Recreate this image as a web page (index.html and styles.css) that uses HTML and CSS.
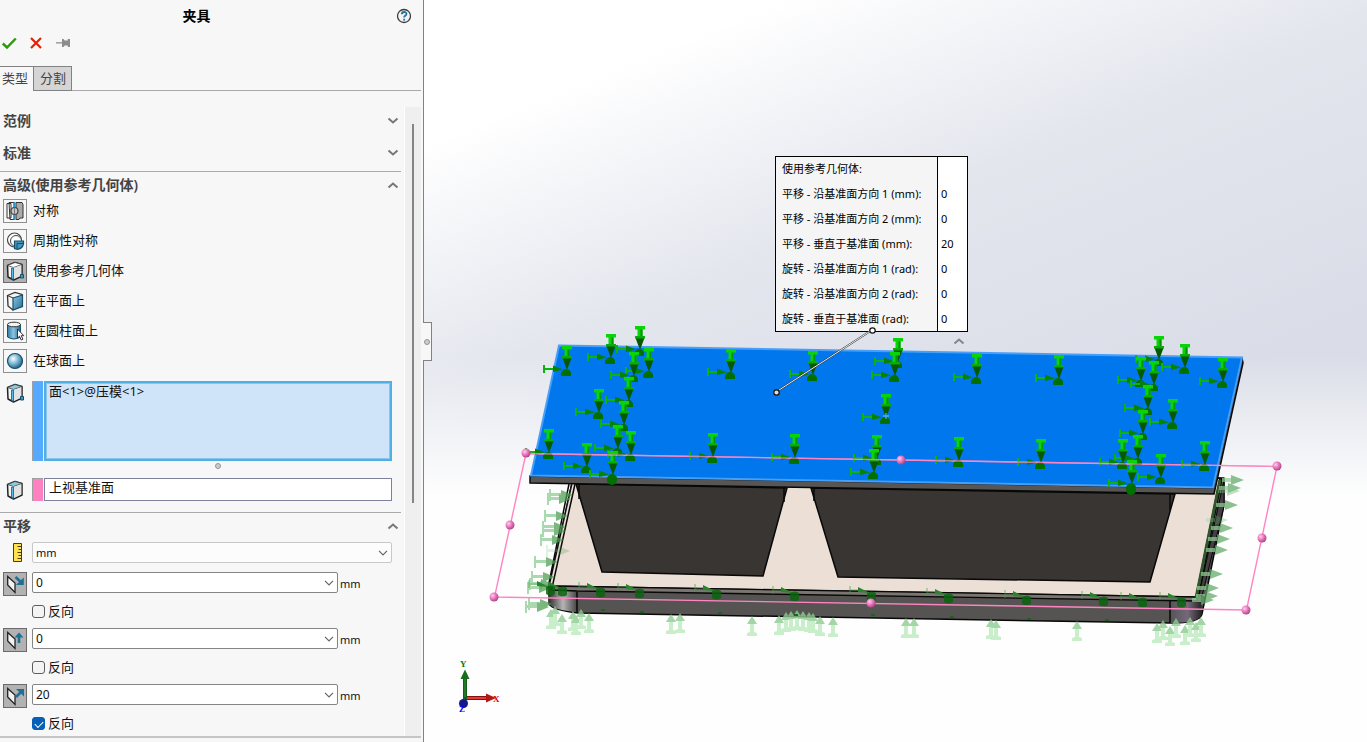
FILE: index.html
```html
<!DOCTYPE html>
<html lang="zh-CN">
<head>
<meta charset="utf-8">
<title>夹具</title>
<link rel="stylesheet" href="styles.css">
</head>
<body>
<svg class="defs" aria-hidden="true">
  <defs>
    <linearGradient id="steel" x1="0" y1="0" x2="1" y2="1"><stop offset="0" stop-color="#8cc6e0"/><stop offset="1" stop-color="#256e94"/></linearGradient>
    <linearGradient id="tube" x1="0" y1="0" x2="1" y2="0"><stop offset="0" stop-color="#2f7ba2"/><stop offset=".45" stop-color="#8cc4de"/><stop offset="1" stop-color="#22658a"/></linearGradient>
    <radialGradient id="ball" cx=".38" cy=".35" r=".65"><stop offset="0" stop-color="#fff"/><stop offset=".45" stop-color="#8cc3dc"/><stop offset="1" stop-color="#25678b"/></radialGradient>
    <symbol id="chev-down" viewBox="0 0 12 8"><path d="M1.500 1.500 6 5.500 10.500 1.500" fill="none" stroke="#777" stroke-width="2"/></symbol>
    <symbol id="chev-up" viewBox="0 0 12 8"><path d="M1.500 6.500 6 2.500 10.500 6.500" fill="none" stroke="#777" stroke-width="2"/></symbol>
    <symbol id="chev-thin" viewBox="0 0 10 6"><path d="M1 .8 5 4.800 9 .8" fill="none" stroke="#666" stroke-width="1.200"/></symbol>
    <symbol id="cube-ref" viewBox="0 0 24 24">
      <path d="M4.500 6.500 12 3.500 19 5.500V17l-8.500 4L5 18z" fill="#f4f4f4" stroke="#222" stroke-width="1.500" stroke-linejoin="round"/>
      <path d="M4.500 6.500 12 3.500 19 5.500 10.500 8.500z" fill="var(--top,#fff)" stroke="#444" stroke-width=".8"/>
      <path d="M10.500 9 18.300 6.300V16.500l-7.800 3.700z" fill="#e2e2e2"/>
      <path d="M9.500 9v12" stroke="#0d527a" stroke-width="2.600"/><path d="M9.500 9.500v10" stroke="#58b9e6" stroke-width="1"/>
    </symbol>
    <symbol id="plane" viewBox="0 0 24 24"><path d="M4.700 4.500 12 11v9.500L4.700 13z" fill="#f2f2f2" stroke="#222" stroke-width="1.300"/></symbol>
  </defs>
</svg>
<main class="app">
  <form class="panel">
    <header class="panel-head">
      <h1>夹具</h1>
      <button type="button" class="plain" aria-label="帮助"><svg width="16" height="16" viewBox="0 0 16 16"><circle cx="8" cy="8" r="6.500" fill="#f4f4f4" stroke="#3b3b42" stroke-width="1.300"/><path d="M5.800 6.300c0-3 4.700-3 4.700-.4 0 1.700-2.400 1.700-2.400 3.700" fill="none" stroke="#1c76a5" stroke-width="1.800"/><path d="M7.200 10.800h1.900v1.800H7.200z" fill="#1c76a5"/></svg></button>
    </header>
    <div class="actions">
      <button type="button" class="plain" aria-label="确定"><svg width="16" height="14" viewBox="0 0 16 14"><path d="M1.800 7.500 6 11.500 14.800 2.500" fill="none" stroke="#2f9a0d" stroke-width="2.500"/></svg></button>
      <button type="button" class="plain" aria-label="取消"><svg width="12" height="12" viewBox="0 0 12 12"><path d="M1 1l10 10M11 1 1 11" stroke="#e22205" stroke-width="2.200"/></svg></button>
      <button type="button" class="plain" aria-label="固定"><svg width="16" height="12" viewBox="0 0 16 12"><path d="M1 5.300h6V2h1.500l1.200 1.500h3V2H15v8h-2.200V8.500H9.700L8.500 10H7V6.500H1z" fill="#8c8c8c"/></svg></button>
    </div>
    <nav class="tabs" role="tablist">
      <button type="button" class="tab active" role="tab" aria-selected="true">类型</button>
      <button type="button" class="tab" role="tab" aria-selected="false">分割</button>
    </nav>
    <div class="body">
      <div class="content">
        <section>
          <h2><button type="button" class="fold">范例<svg><use href="#chev-down"/></svg></button></h2>
        </section>
        <section>
          <h2><button type="button" class="fold">标准<svg><use href="#chev-down"/></svg></button></h2>
        </section>
        <section class="ruled">
          <h2><button type="button" class="fold">高级(使用参考几何体)<svg><use href="#chev-up"/></svg></button></h2>
          <div class="types">
            <button type="button" class="type"><svg viewBox="0 0 24 24"><path d="M4 4.500h4V19H4zM6 3.500h5v17H7z" fill="#fff" stroke="#333"/><path d="M13 3.500h6l1 2V19h-3l-1 1.500h-3z" fill="#aaa" stroke="#333"/><path d="M11.500 3v18" stroke="#2b94c6" stroke-width="1.700"/><circle cx="11.500" cy="12" r="3.500" fill="#c6c6c6" stroke="#444" stroke-width="1.200"/><path d="M11.500 8.500v7" stroke="#777"/></svg><span>对称</span></button>
            <button type="button" class="type"><svg viewBox="0 0 24 24"><circle cx="11.500" cy="11" r="7" fill="#fff" stroke="#444" stroke-width="1.200"/><circle cx="13" cy="12" r="5.500" fill="#fff" stroke="#444"/><path d="M11.500 12h9q1 7-6 8.500l-3-1z" fill="#4095bb" stroke="#194d6b" stroke-width="1.200"/><path d="M14 20v-5.500h6" fill="none" stroke="#194d6b"/></svg><span>周期性对称</span></button>
            <button type="button" class="type selected"><svg viewBox="0 0 24 24"><use href="#cube-ref"/><path d="M17.500 15.500h3v3.500h-3z" fill="#3b9ac5" stroke="#164f70"/></svg><span>使用参考几何体</span></button>
            <button type="button" class="type"><svg viewBox="0 0 24 24"><path d="M4.500 6.500 12 3.500 19 5.500V17l-9 4-5-4z" fill="#f4f4f4" stroke="#333" stroke-width="1.300"/><path d="M10 9 19.500 6v11.500L10 21z" fill="url(#steel)" stroke="#164f70" stroke-width="1.200"/><path d="M4.500 6.500 10 9" stroke="#333"/></svg><span>在平面上</span></button>
            <button type="button" class="type"><svg viewBox="0 0 24 24"><path d="M4.500 5.500V18q6.500 4 13 0V5.500z" fill="url(#tube)" stroke="#164f70"/><ellipse cx="11" cy="5.500" rx="6.500" ry="2.300" fill="#f4f4f4" stroke="#333"/><path d="M14.500 10v9l2-1.700 1.700 3.700 1.700-.8-1.700-3.500h2.600z" fill="#fff" stroke="#333"/></svg><span>在圆柱面上</span></button>
            <button type="button" class="type"><svg viewBox="0 0 24 24"><circle cx="12" cy="12" r="7.500" fill="url(#ball)" stroke="#174e6d" stroke-width="1.200"/></svg><span>在球面上</span></button>
          </div>
          <div class="pick tall">
            <svg class="pick-icon" viewBox="0 0 24 24"><use href="#cube-ref"/><path d="M17.500 15.500h3v3.500h-3z" fill="#3b9ac5" stroke="#164f70"/></svg>
            <span class="swatch blue"></span>
            <textarea class="faces" aria-label="面" readonly>面&lt;1&gt;@压模&lt;1&gt;</textarea>
          </div>
          <div class="grip"><i class="dot"></i></div>
          <div class="pick">
            <svg class="pick-icon" viewBox="0 0 24 24"><use href="#cube-ref"/></svg>
            <span class="swatch pink"></span>
            <input class="ref" aria-label="参考" value="上视基准面" readonly>
          </div>
        </section>
        <section class="ruled">
          <h2><button type="button" class="fold">平移<svg><use href="#chev-up"/></svg></button></h2>
          <div class="field unit">
            <svg class="ruler" viewBox="0 0 24 21"><path d="M10.500 1.500h8v18h-8z" fill="#ffe04d" stroke="#4a3a10"/><path d="M14.500 4.500h4M15.500 7.500h3M14.500 10.500h4M15.500 13.500h3M14.500 16.500h4" stroke="#4a3a10"/></svg>
            <span class="combo pale"><select aria-label="单位"><option>mm</option></select><svg><use href="#chev-thin"/></svg></span>
          </div>
          <div class="field">
            <button type="button" class="dir" aria-label="沿基准面方向 1"><svg viewBox="0 0 24 24"><use href="#plane"/><path d="M12.500 5 19 11" stroke="#1f6f97" stroke-width="2.600"/><path d="M20.800 5.500V13h-8z" fill="#1f6f97"/></svg></button>
            <span class="combo"><select aria-label="方向 1 距离"><option>0</option></select><svg><use href="#chev-thin"/></svg></span><span class="suffix">mm</span>
          </div>
          <label class="check"><input type="checkbox">反向</label>
          <div class="field">
            <button type="button" class="dir" aria-label="沿基准面方向 2"><svg viewBox="0 0 24 24"><use href="#plane"/><path d="M16 15V8" stroke="#1f6f97" stroke-width="2.600"/><path d="M11.500 9.500 16 4.500 20.500 9.500z" fill="#1f6f97"/></svg></button>
            <span class="combo"><select aria-label="方向 2 距离"><option>0</option></select><svg><use href="#chev-thin"/></svg></span><span class="suffix">mm</span>
          </div>
          <label class="check"><input type="checkbox">反向</label>
          <div class="field">
            <button type="button" class="dir" aria-label="垂直于基准面"><svg viewBox="0 0 24 24"><use href="#plane"/><path d="M13 13 19 7" stroke="#1f6f97" stroke-width="2.600"/><path d="M13 5h8v7.500z" fill="#1f6f97"/></svg></button>
            <span class="combo"><select aria-label="垂直距离"><option>20</option></select><svg><use href="#chev-thin"/></svg></span><span class="suffix">mm</span>
          </div>
          <label class="check"><input type="checkbox" checked>反向</label>
        </section>
      </div>
      <div class="scroll"><div class="thumb"></div></div>
    </div>
    <footer class="panel-end"></footer>
  </form>

  <section class="viewport" aria-label="模型">
    <button type="button" class="splitter" aria-label="折叠面板"><i class="dot"></i></button>
    <table class="callout">
      <tr><th>使用参考几何体:</th><td></td></tr>
      <tr><th>平移 - 沿基准面方向 1 (mm):</th><td>0</td></tr>
      <tr><th>平移 - 沿基准面方向 2 (mm):</th><td>0</td></tr>
      <tr><th>平移 - 垂直于基准面 (mm):</th><td>20</td></tr>
      <tr><th>旋转 - 沿基准面方向 1 (rad):</th><td>0</td></tr>
      <tr><th>旋转 - 沿基准面方向 2 (rad):</th><td>0</td></tr>
      <tr><th>旋转 - 垂直于基准面 (rad):</th><td>0</td></tr>
    </table>
    <svg class="scene">
      <defs>
        <linearGradient id="cornerL"><stop offset="0" stop-color="#333"/><stop offset=".5" stop-color="#b5b5b5"/><stop offset="1" stop-color="#444"/></linearGradient>
        <linearGradient id="cornerR"><stop offset="0" stop-color="#555"/><stop offset=".55" stop-color="#75687a"/><stop offset="1" stop-color="#222"/></linearGradient>
        <radialGradient id="pinkball" cx=".35" cy=".35" r=".7"><stop offset="0" stop-color="#ffd0ee"/><stop offset=".45" stop-color="#ee7dc4"/><stop offset="1" stop-color="#a8417f"/></radialGradient>
        <g id="fix">
          <path d="M-24-11h2v3h9v2h-9v3h-2z" fill="#0eb30e"/><path d="M-14-10.500-4-6.500-14-4z" fill="#078207"/>
          <path d="M-6 0v-3q2-4 5-4 4 0 5 4v3z" fill="#007000"/>
          <path d="M-5-30h10v3.500H2.500v8h-5v-8H-5z" fill="#08d408"/><path d="M.5-26.500h2v8h-2z" fill="#079107"/>
          <path d="M-4.500-18h9L0-6z" fill="#045904"/><path d="M-5-20H5v2.500H-5z" fill="#08ad08"/>
        </g>
        <g id="side"><path d="M-24-6h2v4h11v3h-11v5h-2z" fill="#8ccc91"/><path d="M-12-5 0 0-12 5z" fill="#4b9d50"/></g>
        <g id="sideR"><path d="M-22-2h12v4h-12z" fill="#8fd094"/><path d="M-13-5 0 0-13 5z" fill="#61a966"/></g>
        <g id="up"><path d="M-5 0v-3l3-1v-9h4v9l3 1v3z" fill="#bbecbd"/><path d="M-5-12 0-20 5-12z" fill="#8dcb91"/></g>
        <g id="tray"><path d="M-22-11v8M-22-7h10" stroke="#43a348" stroke-opacity=".6" stroke-width="1.200" fill="none"/><path d="M-14-10-2-4-14-5z" fill="#2b842e"/><path d="M-5-4q5-3 9 0v7q-4 3-9 0z" fill="#0b640f" fill-opacity=".85"/></g>
        <circle id="handle" r="4.500" fill="url(#pinkball)"/>
      </defs>
      <g transform="translate(-424 0)">
        <g stroke-linejoin="round">
          <path d="M572 483 549 588v16q4 6 29 9l592 10q30 0 32-9l22-109v-27z" fill="#565452" stroke="#080808" stroke-width="1.500"/>
          <path d="M549 588v16q4 6 28 8v-20z" fill="url(#cornerL)"/>
          <path d="M1170 601v22q30 0 32-9l-1-20z" fill="url(#cornerR)"/>
          <path d="M572 483 1220 478 1196 597 549 586z" fill="#ecdfd6" stroke="#111" stroke-width="1.500"/>
          <path d="M549 586 1196 597 1198 601 577 591 552 590z" fill="#7a7570" stroke="#080808" stroke-width="1.300"/>
          <path d="M569 484 548 588M575 484 552 588M577 592v20M1170 600v23M1222 478 1198 599" stroke="#080808" stroke-width="1.500" fill="none"/>
          <path d="M1220 480 1196 598" stroke="#31552c" stroke-width="3"/>
          <path d="M1224 480v26l-22 90-3-1z" fill="#453e42" stroke="#080808"/>
          <path d="M576 484 602 572 763 576 787 488z" fill="#383533" stroke="#080808" stroke-width="1.500"/>
          <path d="M811 488 838 577 1150 582 1175 494z" fill="#383533" stroke="#080808" stroke-width="1.500"/>
          <path d="M579 485v14M784 487v15M814 488v13M1170 494v16" stroke="#080808" stroke-width="1.500"/>
        </g>
        <g opacity=".72">
          <use href="#side" x="573" y="495"/><use href="#side" x="571" y="499"/><use href="#side" x="568" y="516"/><use href="#side" x="566" y="527"/><use href="#side" x="566" y="531"/><use href="#side" x="564" y="540"/><use href="#side" x="570" y="551" opacity=".35"/><use href="#side" x="558" y="562"/><use href="#side" x="555" y="577"/><use href="#side" x="553" y="584"/><use href="#side" x="551" y="588"/><use href="#side" x="552" y="604"/><use href="#side" x="549" y="607"/>
        </g>
        <g opacity=".72">
          <use href="#sideR" x="1244" y="480"/><use href="#sideR" x="1241" y="488"/><use href="#sideR" x="1240" y="491" opacity=".5"/><use href="#sideR" x="1238" y="505"/><use href="#sideR" x="1228" y="520" opacity=".4"/><use href="#sideR" x="1233" y="528"/><use href="#sideR" x="1230" y="539"/><use href="#sideR" x="1228" y="550"/><use href="#sideR" x="1223" y="574"/><use href="#sideR" x="1219" y="588"/><use href="#sideR" x="1218" y="596"/><use href="#sideR" x="1214" y="600"/>
        </g>
        <g opacity=".8">
          <use href="#up" x="551" y="629"/><use href="#up" x="555" y="626"/><use href="#up" x="562" y="634"/><use href="#up" x="573" y="631"/><use href="#up" x="576" y="635"/><use href="#up" x="581" y="629"/><use href="#up" x="589" y="633"/>
          <use href="#up" x="671" y="634"/><use href="#up" x="680" y="633"/><use href="#up" x="752" y="636"/><use href="#up" x="779" y="635"/><use href="#up" x="786" y="632"/><use href="#up" x="791" y="631"/><use href="#up" x="797" y="630"/><use href="#up" x="803" y="631"/><use href="#up" x="809" y="632"/><use href="#up" x="813" y="633"/><use href="#up" x="820" y="636"/><use href="#up" x="833" y="637"/>
          <use href="#up" x="906" y="638"/><use href="#up" x="914" y="638"/><use href="#up" x="991" y="639"/><use href="#up" x="996" y="640"/><use href="#up" x="1077" y="641"/>
          <use href="#up" x="1157" y="643"/><use href="#up" x="1163" y="640"/><use href="#up" x="1170" y="646"/><use href="#up" x="1176" y="638"/><use href="#up" x="1185" y="645"/><use href="#up" x="1190" y="637"/><use href="#up" x="1196" y="642"/><use href="#up" x="1201" y="637"/>
        </g>
        <use href="#tray" x="563" y="592"/><use href="#tray" x="551" y="591"/><use href="#tray" x="601" y="593"/><use href="#tray" x="640" y="594"/><use href="#tray" x="717" y="595"/><use href="#tray" x="795" y="597"/><use href="#tray" x="872" y="597"/><use href="#tray" x="949" y="599"/><use href="#tray" x="1027" y="601"/><use href="#tray" x="1104" y="602"/><use href="#tray" x="1143" y="603"/><use href="#tray" x="1182" y="603"/>
        <path d="M601 610h4M640 612h4M718 613h4M794 615h4M871 615h4M950 617h4M1027 619h4M1105 620h4" stroke="#19651c" stroke-width="2"/>

        <path d="M530 476 1213 488 1242 358 1243 363 1214 494 530 483z" fill="#585654" stroke="#080808" stroke-width="1.500"/>
        <path d="M559 345.500 1242 357.500 1213 487.500 531 475.500z" fill="#0077ed" stroke="#489ff8" stroke-width="2"/>
        <path d="M526 453.500 1277 466.500 1246.500 610 494.500 597z" fill="none" stroke="#ff85c2" stroke-width="1.400"/>
        <g>
          <use href="#fix" x="567" y="376"/><use href="#fix" x="640" y="356"/><use href="#fix" x="611" y="364"/><use href="#fix" x="649" y="378"/><use href="#fix" x="634" y="382"/><use href="#fix" x="629" y="407"/><use href="#fix" x="599" y="419"/><use href="#fix" x="624" y="431"/><use href="#fix" x="549" y="459"/><use href="#fix" x="618" y="455"/><use href="#fix" x="631" y="461"/><use href="#fix" x="587" y="473"/><use href="#fix" x="613" y="481"/><circle cx="612" cy="480" r="5" fill="#007000"/><use href="#fix" x="731" y="379"/><use href="#fix" x="713" y="463"/>
          <use href="#fix" x="813" y="381"/><use href="#fix" x="898" y="368"/><use href="#fix" x="895" y="382"/><use href="#fix" x="977" y="384"/><use href="#fix" x="886" y="424"/><use href="#fix" x="795" y="464"/><use href="#fix" x="877" y="465"/><use href="#fix" x="874" y="479"/><use href="#fix" x="959" y="467"/>
          <use href="#fix" x="1059" y="385"/><use href="#fix" x="1159" y="366"/><use href="#fix" x="1185" y="374"/><use href="#fix" x="1223" y="388"/><use href="#fix" x="1141" y="387"/><use href="#fix" x="1154" y="391"/><use href="#fix" x="1148" y="415"/><use href="#fix" x="1173" y="429"/><use href="#fix" x="1143" y="440"/><use href="#fix" x="1138" y="465"/><use href="#fix" x="1123" y="469"/><use href="#fix" x="1041" y="469"/><use href="#fix" x="1161" y="484"/><use href="#fix" x="1205" y="471"/><use href="#fix" x="1132" y="490"/><circle cx="1131" cy="490" r="5" fill="#007000"/>
        </g>
        <path d="M526 453.500 1277 466.500" stroke="#ff85c2" stroke-width="1.300" stroke-opacity=".75"/>
        <path d="M883 416h6M886 413v6" stroke="#71c4ff"/>
        <use href="#handle" x="526" y="453"/><use href="#handle" x="901" y="460"/><use href="#handle" x="1277" y="466"/><use href="#handle" x="510" y="525"/><use href="#handle" x="1262" y="538"/><use href="#handle" x="494" y="597"/><use href="#handle" x="871" y="603"/><use href="#handle" x="1246" y="610"/>
        <path d="M872 330 776 392" stroke="#333" stroke-width="1.800"/><path d="M872 330 776 392" stroke="#eee" stroke-width="1"/>
        <circle cx="872.500" cy="330.500" r="2.700" fill="#fff" stroke="#111" stroke-width="1.200"/><circle cx="776.500" cy="392.500" r="2.700" fill="#ddd" stroke="#111" stroke-width="1.200"/>
        <path d="M954.500 343.500 959 339.500 963.500 343.500" fill="none" stroke="#858585" stroke-width="2"/>
        <path d="M465 698h22" stroke="#801212" stroke-width="4"/><path d="M465 698h22" stroke="#e33c38" stroke-width="2"/><path d="M486 693.500 496 698 486 702.500z" fill="#b01818"/>
        <path d="M465 699v-22" stroke="#145f18" stroke-width="4"/><path d="M465 697v-20" stroke="#38933b"/><path d="M460.500 679 465 669.500 469.500 679z" fill="#146d19"/>
        <circle cx="463.500" cy="703.500" r="4.500" fill="#16168e"/>
        <text class="axis" x="460" y="667" fill="#087a08">Y</text><text class="axis" x="493" y="702" fill="#e00000">X</text><text class="axis" x="459" y="712" fill="#0808e8">Z</text>
      </g>
    </svg>
  </section>
</main>
</body>
</html>
```
FILE: styles.css
```css
* { box-sizing: border-box; }

body {
  margin: 0;
  font-family: "Noto Sans", "Noto Sans CJK SC", sans-serif;
  font-size: 13px;
  line-height: 20px;
  color: #111;
}

button, input, select, textarea {
  font: inherit;
  color: inherit;
  margin: 0;
}

.defs { position: absolute; width: 0; height: 0; }

.app {
  display: flex;
  height: 100vh;
  overflow: hidden;
}

.panel {
  display: flex;
  flex: 0 0 424px;
  flex-direction: column;
  padding-right: 2px;
  background: #f7f7f7;
  border-right: 1px solid #828282;
}

.panel-head {
  display: flex;
  align-items: center;
  height: 32px;
  padding-right: 9px;
}

h1 {
  flex: 1;
  margin: 0;
  padding-right: 3px;
  font-size: 14px;
  font-weight: 600;
  text-align: center;
  color: #000;
}

.plain {
  display: flex;
  padding: 0;
  background: none;
  border: 0;
}

.actions {
  display: flex;
  gap: 13px;
  align-items: center;
  height: 22px;
  padding-left: 1px;
}

.tabs {
  display: flex;
  height: 25px;
  margin-top: 12px;
  border-bottom: 1px solid #a9a9a9;
}

.tab {
  height: 25px;
  padding: 0 5px 0 6px;
  line-height: 21px;
  color: #444;
  background: #d5d5d5;
  border: 1px solid #828282;
}

.tab.active {
  padding: 0 5px 2px 2px;
  background: #f7f7f7;
  border-width: 1px 0 0;
}

.body {
  display: flex;
  flex: 1;
  min-height: 0;
  margin-top: 16px;
}

.content {
  flex: 1;
  min-width: 0;
  overflow: hidden;
}

.scroll {
  width: 17px;
  padding: 17px 0 0 7px;
  background: #efefef;
  border-left: 1px solid #fff;
}

.thumb {
  width: 2px;
  height: 62%;
  background: #858585;
}

.panel-end {
  height: 6px;
  border-top: 2px solid #c5c5c5;
}

section > h2 { margin: 0; }

.content section { margin-right: 3px; }

.fold {
  display: flex;
  align-items: center;
  justify-content: space-between;
  width: 100%;
  height: 28px;
  padding: 0 2px 0 3px;
  font-size: 14px;
  font-weight: 600;
  color: #444;
  background: none;
  border: 0;
}

.fold svg { width: 12px; height: 8px; }

.content section + section { margin-top: 4px; }

.ruled { border-top: 1px solid #a9a9a9; }

.ruled .fold {
  height: 27px;
  padding-bottom: 2px;
}

.content section.ruled + .ruled { margin-top: 11px; }

.types {
  display: flex;
  flex-direction: column;
  gap: 6px;
  padding-left: 3px;
}

.type {
  display: flex;
  gap: 6px;
  align-items: center;
  height: 24px;
  padding: 0;
  background: none;
  border: 0;
  text-align: left;
}

.type span { padding-bottom: 2px; }

.type svg, .dir {
  width: 24px;
  height: 24px;
  background: #f7f7f7;
  box-shadow: inset 0 0 0 1px #8f8f8f;
}

.type.selected svg, .dir {
  background: #b2b2b2;
  box-shadow: inset 0 0 0 1px #6b6b6b;
}

.pick {
  display: flex;
  align-items: stretch;
  height: 23px;
  padding: 0 9px 0 3px;
}

.pick.tall {
  height: 80px;
  margin-top: 8px;
}

.pick-icon {
  --top: #8bc9e5;
  width: 24px;
  height: 24px;
  margin-right: 5px;
}

.swatch {
  width: 11px;
  margin-right: 1px;
  border: 1px solid #a0a0a0;
  border-width: 1px 0 0 1px;
}

.blue { background: #55a9ff; }
.pink { background: #ff80c0; }

.faces, .ref {
  flex: 1;
  min-width: 0;
  outline: 0;
  border-radius: 0;
}

.faces {
  resize: none;
  padding: 0 3px;
  line-height: 16px;
  background: #cfe4f8;
  border: 2px solid #4eb0e5;
  box-shadow: inset 0 0 0 1px #8bc5ed;
}

.ref {
  padding: 0 4px 5px;
  background: #fff;
  border: 1px solid #7c819e;
}

.grip {
  display: flex;
  justify-content: center;
  height: 17px;
  padding: 2px 0 0 35px;
}

.dot {
  width: 6px;
  height: 6px;
  background: #ccc;
  border: 1px solid #949494;
  border-radius: 50%;
}

.field {
  display: flex;
  height: 24px;
  padding: 0 63px 0 3px;
  margin-bottom: 4px;
}

.field.unit {
  padding-right: 9px;
  margin: 2px 0 6px;
}

.ruler {
  width: 24px;
  height: 21px;
  margin-right: 5px;
}

.dir {
  display: flex;
  flex: none;
  padding: 0;
  margin-right: 5px;
  border: 0;
}

.dir svg { width: 24px; height: 24px; }

.combo {
  position: relative;
  flex: 1;
  height: 21px;
}

.combo select {
  appearance: none;
  display: block;
  width: 100%;
  height: 21px;
  padding: 0 20px 0 3px;
  font-size: 12px;
  line-height: 18px;
  background: #fff;
  border: 1px solid #858585;
  border-radius: 2px;
}

.combo.pale select {
  font-size: 11px;
  background: #fcfcfc;
  border-color: #c8c8c8;
}

.combo svg {
  position: absolute;
  right: 4px;
  top: 8px;
  width: 10px;
  height: 6px;
  pointer-events: none;
}

.suffix {
  flex: none;
  width: 20px;
  margin-right: -20px;
  padding-left: 2px;
  font-size: 11px;
  line-height: 24px;
}

.check {
  display: flex;
  gap: 3px;
  align-items: center;
  height: 20px;
  padding-left: 32px;
  margin: 5px 0 7px;
}

.check input {
  appearance: none;
  display: grid;
  place-items: center;
  width: 13px;
  height: 13px;
  background: #f4f4f4;
  border: 1px solid #5d5d5d;
  border-radius: 3px;
}

.check input:checked {
  background: #0560b6;
  border-color: #0560b6;
}

.check input:checked::before {
  content: "";
  width: 7px;
  height: 4px;
  border: 1px solid #fff;
  border-width: 0 0 1px 1px;
  transform: rotate(-45deg);
}

.viewport {
  position: relative;
  flex: 1;
  min-width: 0;
  background:
    linear-gradient(180deg, rgba(255, 255, 255, 0) 48%, #fefefe 67%),
    linear-gradient(158deg, #fff 13%, #e4e6ee 35%, #dadde7 62%);
}

.splitter {
  position: absolute;
  left: -1px;
  top: 322px;
  display: flex;
  align-items: center;
  justify-content: center;
  width: 9px;
  height: 39px;
  padding: 0;
  background: #f7f7f7;
  border: 1px solid #828282;
  border-left: 0;
}

.scene {
  position: absolute;
  left: 0;
  top: 0;
  width: 100%;
  height: 100%;
  pointer-events: none;
}

.callout {
  position: absolute;
  left: 351px;
  top: 156px;
  border-collapse: collapse;
  font-size: 11px;
  line-height: 16px;
  color: #000;
  border: 1px solid #000;
}

.callout th, .callout td {
  height: 25px;
  padding: 0 3px;
  font-weight: 400;
  text-align: left;
}

.callout th {
  width: 162px;
  padding-left: 6px;
  background: #f5f5f5;
  white-space: nowrap;
}

.callout td {
  width: 30px;
  background: #fff;
  border-left: 1px solid #000;
}

.axis { font: 700 9px "Liberation Serif", serif; }
```
